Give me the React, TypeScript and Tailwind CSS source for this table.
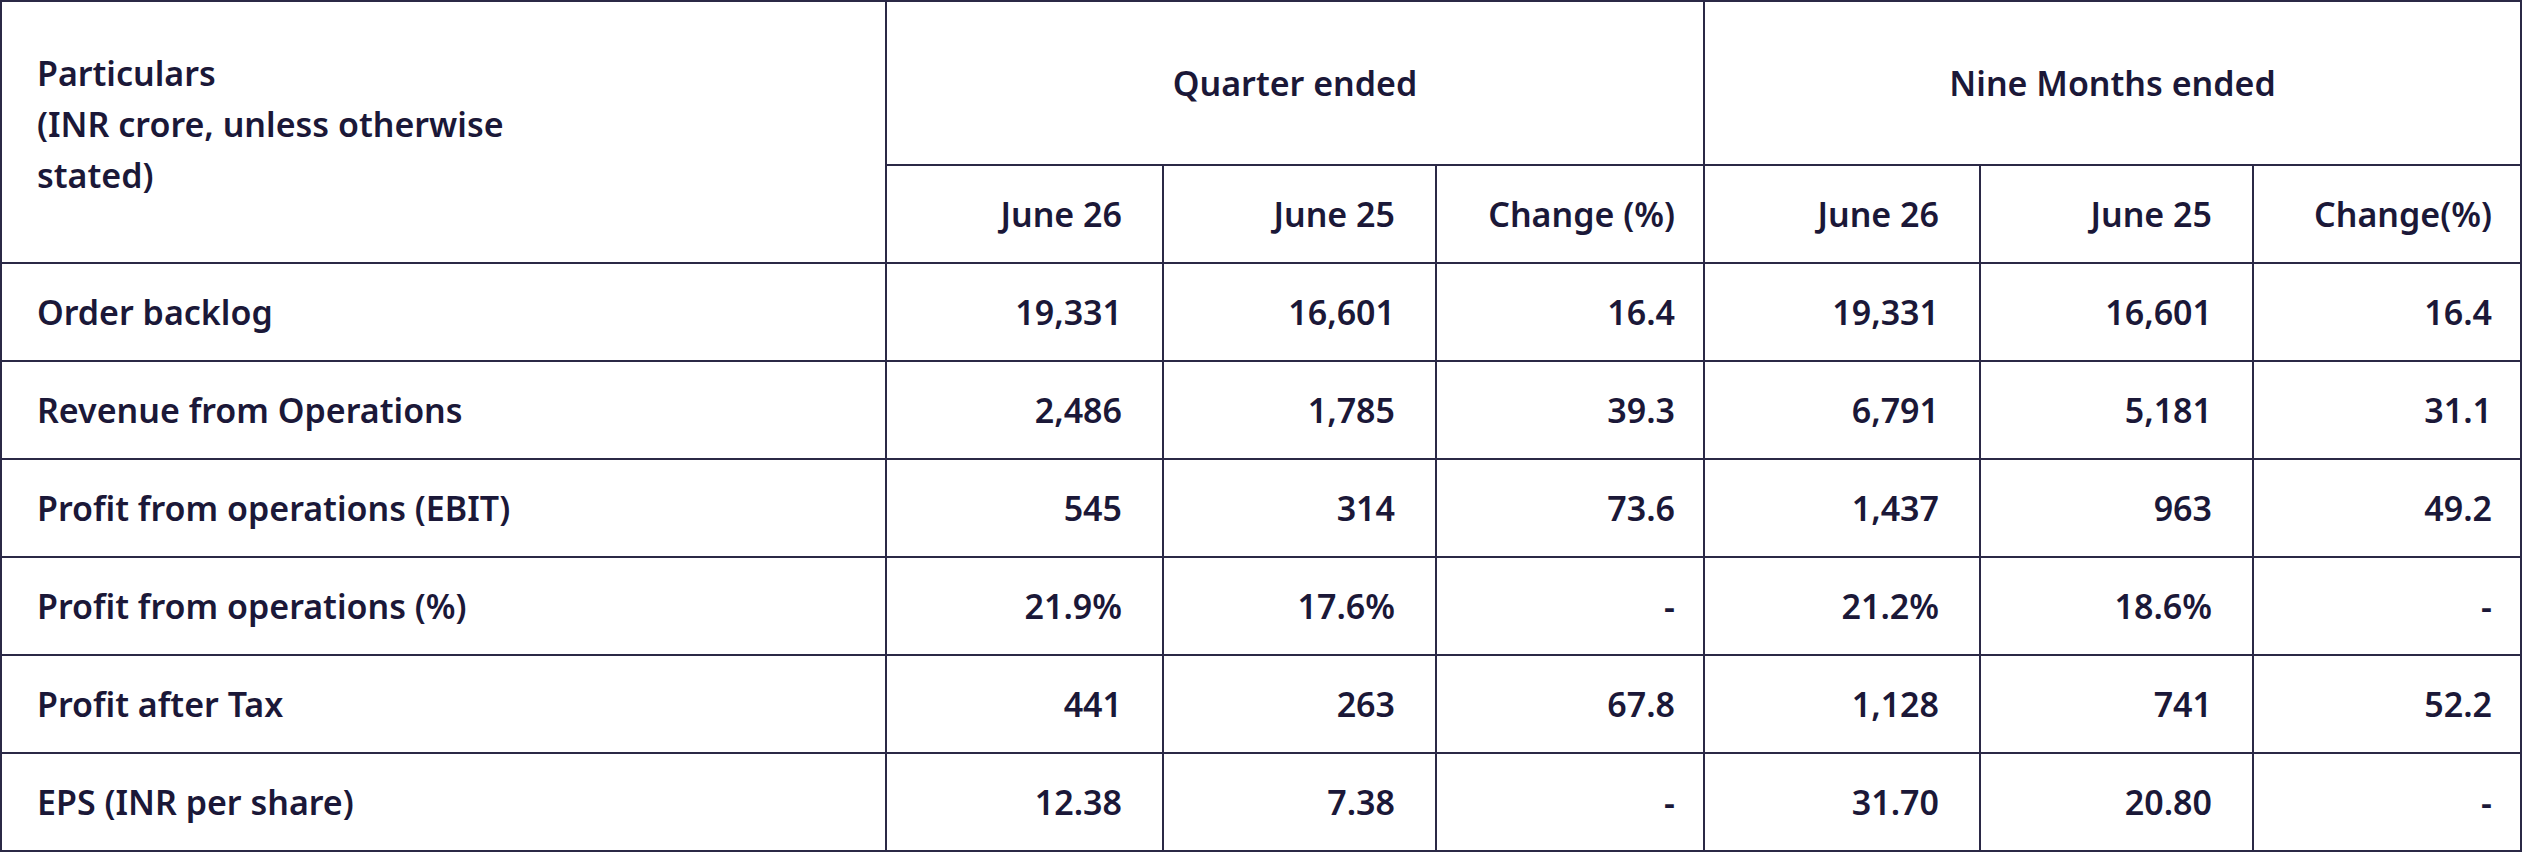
import React from "react";

const rows: { label: string; v: string[] }[] = [
  { label: "Order backlog", v: ["19,331", "16,601", "16.4", "19,331", "16,601", "16.4"] },
  { label: "Revenue from Operations", v: ["2,486", "1,785", "39.3", "6,791", "5,181", "31.1"] },
  { label: "Profit from operations (EBIT)", v: ["545", "314", "73.6", "1,437", "963", "49.2"] },
  { label: "Profit from operations (%)", v: ["21.9%", "17.6%", "-", "21.2%", "18.6%", "-"] },
  { label: "Profit after Tax", v: ["441", "263", "67.8", "1,128", "741", "52.2"] },
  { label: "EPS (INR per share)", v: ["12.38", "7.38", "-", "31.70", "20.80", "-"] },
];

const heads = ["June 26", "June 25", "Change (%)", "June 26", "June 25", "Change(%)"];

const cell = "border-r-2 border-b-2 border-[#2b2946] flex items-center";

export default function App() {
  return (
    <div
      className="w-[2522px] h-[854px] bg-white text-[#1b1838] font-semibold text-[34px]"
      style={{ fontFamily: '"Noto Sans", "Open Sans", sans-serif' }}
    >
      <div className="grid grid-cols-[885px_277px_273px_268px_276px_273px_268px] grid-rows-[164px_98px_repeat(6,98px)] border-l-2 border-t-2 border-[#2b2946] w-[2522px]">
        <div className={`${cell} row-span-2 pl-[35px] pb-[16px] leading-[51px]`}>
          <div>
            Particulars
            <br />
            (INR crore, unless otherwise
            <br />
            stated)
          </div>
        </div>
        <div className={`${cell} col-span-3 justify-center`}>Quarter ended</div>
        <div className={`${cell} col-span-3 justify-center`}>Nine Months ended</div>
        {heads.map((h, i) => (
          <div key={i} className={`${cell} justify-end ${i % 3 === 2 ? "pr-[28px]" : "pr-[40px]"}`}>
            {h}
          </div>
        ))}
        {rows.map((r) => (
          <React.Fragment key={r.label}>
            <div className={`${cell} pl-[35px]`}>{r.label}</div>
            {r.v.map((v, i) => (
              <div key={i} className={`${cell} justify-end ${i % 3 === 2 ? "pr-[28px]" : "pr-[40px]"}`}>
                {v}
              </div>
            ))}
          </React.Fragment>
        ))}
      </div>
    </div>
  );
}
